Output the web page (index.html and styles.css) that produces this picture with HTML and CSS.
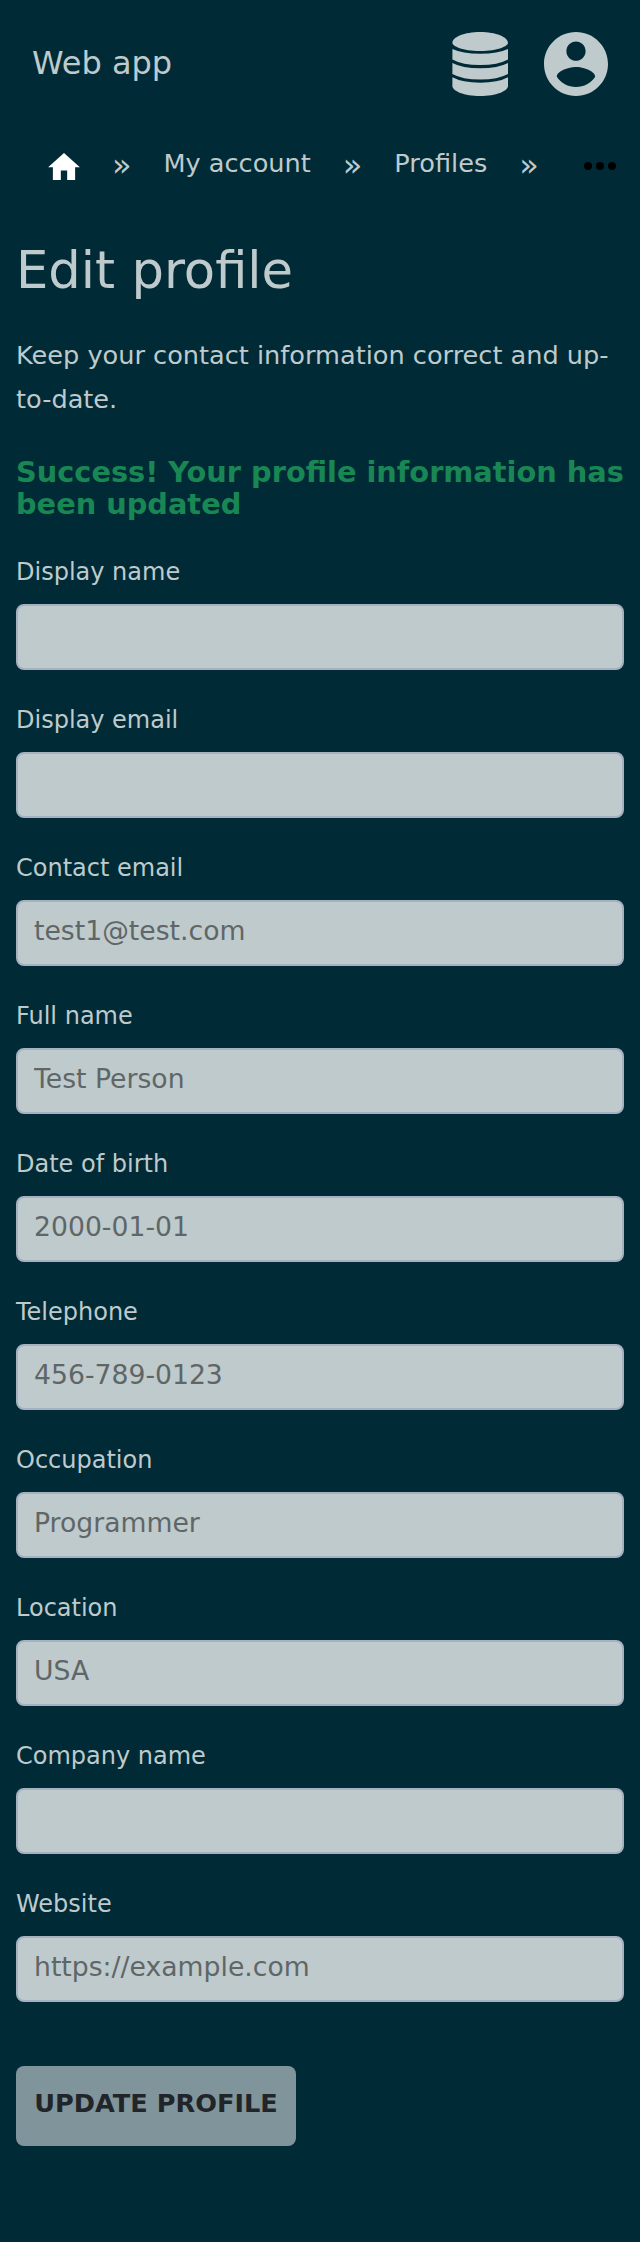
FILE: index.html
```html
<!DOCTYPE html>
<html lang="en">
<head>
<meta charset="utf-8">
<title>Edit profile</title>
<link rel="stylesheet" href="styles.css">
</head>
<body>
<header class="topbar">
  <span class="brand">Web app</span>
  <div class="actions">
    <svg class="db" viewBox="-.4 0 56.400 64" preserveAspectRatio="none"><path d="M0 11C0 5 12 0 28 0S56 5 56 11C56 14 46 19 28 19S0 14 0 11ZM0 17Q10 21.700 28 21.700T56 17V27.500Q46 33 28 33T0 27.500ZM0 31Q10 36.300 28 36.300T56 31V42Q46 47.500 28 47.500T0 42ZM0 45.300Q10 50.700 28 50.700T56 45.300V54C56 59 44 64 28 64S0 59 0 54Z"/></svg>
    <svg class="account" viewBox="2 2 20 20"><path d="M12 2C6.480 2 2 6.480 2 12s4.480 10 10 10 10-4.480 10-10S17.520 2 12 2zm0 3c1.660 0 3 1.340 3 3s-1.340 3-3 3-3-1.340-3-3 1.340-3 3-3zm0 14.200c-2.500 0-4.710-1.280-6-3.220.030-1.990 4-3.080 6-3.080 1.990 0 5.970 1.090 6 3.080-1.290 1.940-3.500 3.220-6 3.220z"/></svg>
  </div>
</header>
<nav class="crumbs">
  <svg class="home" viewBox="2 3 20 17"><path d="M10 20v-6h4v6h5v-8h3L12 3 2 12h3v8z"/></svg>
  <span class="sep">»</span>
  <a class="crumb">My account</a>
  <span class="sep">»</span>
  <a class="crumb">Profiles</a>
  <span class="sep">»</span>
  <svg class="more" viewBox="0 0 32 8"><circle cx="4" cy="4" r="4"/><circle cx="16" cy="4" r="4"/><circle cx="28" cy="4" r="4"/></svg>
</nav>
<main class="content">
  <h1 class="title">Edit profile</h1>
  <p class="intro">Keep your contact information correct and up-to-date.</p>
  <p class="success">Success! Your profile information has been updated</p>
  <form class="form">
    <label class="field">Display name<input class="input"></label>
    <label class="field">Display email<input class="input"></label>
    <label class="field">Contact email<input class="input" placeholder="test1@test.com"></label>
    <label class="field">Full name<input class="input" placeholder="Test Person"></label>
    <label class="field">Date of birth<input class="input" placeholder="2000-01-01"></label>
    <label class="field">Telephone<input class="input" placeholder="456-789-0123"></label>
    <label class="field">Occupation<input class="input" placeholder="Programmer"></label>
    <label class="field">Location<input class="input" placeholder="USA"></label>
    <label class="field">Company name<input class="input"></label>
    <label class="field">Website<input class="input" placeholder="https://example.com"></label>
    <button class="submit" type="button">UPDATE PROFILE</button>
  </form>
</main>
</body>
</html>
```
FILE: styles.css
```css
* { box-sizing: border-box; }
body {
  margin: 0;
  min-height: 2242px;
  background: #002b36;
  color: #bfcacc;
  font-family: "DejaVu Sans", sans-serif;
  font-size: 25.6px;
}
svg { display: block; flex: none; fill: #bfcacc; }
.topbar {
  display: flex;
  justify-content: space-between;
  align-items: center;
  height: 128px;
  padding: 0 32px;
}
.brand { font-size: 32px; line-height: 40px; margin-bottom: 2px; }
.actions { display: flex; gap: 36px; }
.db { width: 56px; height: 64px; }
.account { width: 64px; height: 64px; }
.crumbs {
  display: flex;
  align-items: flex-start;
  height: 112px;
  padding: 15px 0 0 48px;
}
.crumb, .sep { line-height: 40px; white-space: nowrap; }
.sep { width: 83.5px; padding-top: 2px; text-align: center; font-size: 32px; }
.home { width: 32px; height: 27px; margin-top: 9.5px; fill: #fff; }
.more { width: 32px; height: 8px; margin: 19px 0 0 13.5px; fill: #000; }
.content { padding: 0 16px; }
.title { margin: 0 0 33px; font-size: 51.2px; font-weight: 400; line-height: 60px; }
.intro { margin: 0 0 35px; line-height: 44px; }
.success { margin: 0 0 30px; font-size: 28.8px; font-weight: 700; line-height: 32px; color: #198754; }
.field { display: block; height: 148px; font-size: 24px; line-height: 44px; }
.input {
  display: block;
  width: 100%;
  height: 66px;
  margin-top: 10px;
  padding: 9px 16px 14px;
  border: 2px solid #a5b1c0;
  border-radius: 8px;
  background: #bfcacc;
  font: 26.667px "DejaVu Sans", sans-serif;
}
.input::placeholder { color: #5f6667; opacity: 1; }
.submit {
  display: block;
  width: 280px;
  height: 80px;
  margin-top: 36px;
  padding: 0 0 6px;
  border: 0;
  border-radius: 8px;
  background: #80949b;
  color: #212529;
  font: 700 25.6px "DejaVu Sans", sans-serif;
}
```
